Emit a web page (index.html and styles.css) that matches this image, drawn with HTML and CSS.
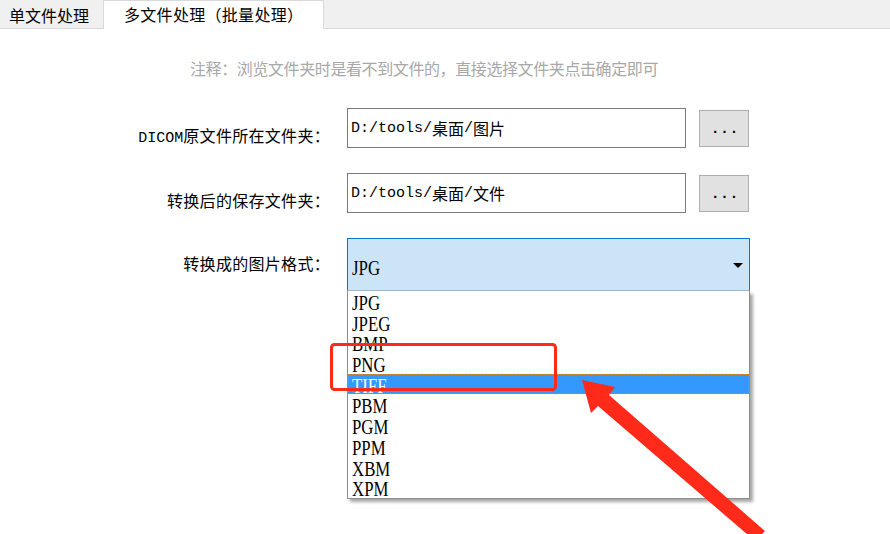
FILE: index.html
```html
<!DOCTYPE html>
<html lang="zh-CN">
<head>
<meta charset="utf-8">
<title>多文件处理</title>
<link rel="stylesheet" href="styles.css">
</head>
<body>
<div class="app">
  <div class="tabbar">
    <div class="tab">单文件处理</div>
    <div class="tab active">多文件处理（批量处理）</div>
  </div>
  <div class="panel">
    <p class="note">注释：浏览文件夹时是看不到文件的，直接选择文件夹点击确定即可</p>
    <div class="form">
      <div class="row">
        <label class="label"><span class="lat">DICOM</span>原文件所在文件夹：</label>
        <div class="input"><span class="lat">D:/tools/</span>桌面<span class="lat">/</span>图片</div>
        <button class="btn">...</button>
      </div>
      <div class="row">
        <label class="label">转换后的保存文件夹：</label>
        <div class="input"><span class="lat">D:/tools/</span>桌面<span class="lat">/</span>文件</div>
        <button class="btn">...</button>
      </div>
      <div class="row combo-row">
        <label class="label">转换成的图片格式：</label>
        <div class="combo-wrap">
          <div class="combo"><span class="cond">JPG</span><span class="caret"></span></div>
          <ul class="list">
            <li><span class="cond">JPG</span></li>
            <li><span class="cond">JPEG</span></li>
            <li><span class="cond">BMP</span></li>
            <li><span class="cond">PNG</span></li>
            <li class="sel"><span class="cond">TIFF</span></li>
            <li><span class="cond">PBM</span></li>
            <li><span class="cond">PGM</span></li>
            <li><span class="cond">PPM</span></li>
            <li><span class="cond">XBM</span></li>
            <li><span class="cond">XPM</span></li>
          </ul>
        </div>
      </div>
    </div>
  </div>
  <svg class="annot" width="890" height="534" viewBox="0 0 890 534">
    <rect x="331.5" y="344.5" width="224" height="45" rx="3" ry="3" fill="none" stroke="#ff2a1a" stroke-width="3"/>
    <polygon points="582,380 615,387 609,395 765,531 755,541 598,406 591,413" fill="#ff2a1a"/>
  </svg>
</div>
</body>
</html>
```

FILE: styles.css
```css
html, body {
  margin: 0;
  padding: 0;
  background: #ffffff;
}
.app {
  position: relative;
  width: 890px;
  height: 534px;
  overflow: hidden;
  font-family: "Noto Sans CJK SC", "Noto Sans", sans-serif;
  font-size: 16px;
  color: #000;
}
.tabbar {
  display: flex;
  align-items: flex-end;
  height: 28px;
  background: #f0f0f0;
  border-bottom: 1px solid #d9d9d9;
}
.tab {
  height: 26px;
  line-height: 26px;
  padding: 0 14px 0 9px;
  font-size: 16px;
  color: #000;
}
.tab.active {
  height: 28px;
  line-height: 26px;
  padding: 0 20px 0 20px;
  background: #fff;
  border: 1px solid #d9d9d9;
  border-bottom: none;
  margin-bottom: -1px;
  letter-spacing: 0.3px;
}
.panel {
  display: flex;
  flex-direction: column;
}
.note {
  margin: 28px 0 0 0;
  padding-left: 190px;
  line-height: 22px;
  color: #a8a8a8;
  font-size: 16px;
  letter-spacing: -0.4px;
}
.form {
  display: flex;
  flex-direction: column;
  gap: 25px;
  margin-top: 29px;
}
.row {
  display: flex;
  align-items: flex-start;
  height: 40px;
}
.combo-row {
  height: 53px;
}
.label {
  width: 330px;
  text-align: right;
  font-size: 16px;
  line-height: 20px;
  margin-top: 17px;
  flex: none;
  letter-spacing: 0.3px;
}
.combo-row .label {
  margin-top: 15px;
}
.lat {
  font-family: "Liberation Mono", monospace;
  font-size: 15px;
  letter-spacing: 0;
}
.label .lat {
  font-size: 15px;
}
.input {
  box-sizing: border-box;
  width: 339px;
  height: 40px;
  margin-left: 17px;
  border: 1px solid #7a7a7a;
  background: #fff;
  padding: 0 3px;
  display: flex;
  align-items: center;
  font-size: 16px;
  white-space: nowrap;
  flex: none;
}
.btn {
  box-sizing: border-box;
  width: 50px;
  height: 37px;
  margin-top: 2px;
  margin-left: 13px;
  border: 1px solid #adadad;
  background: #e1e1e1;
  font-family: "Liberation Mono", monospace;
  font-size: 14px;
  font-weight: bold;
  letter-spacing: 1px;
  color: #000;
  padding: 0 0 0 2px;
  flex: none;
}
.combo-wrap {
  position: relative;
  margin-left: 17px;
  width: 403px;
  flex: none;
}
.combo {
  box-sizing: border-box;
  height: 53px;
  border: 1px solid #0078d7;
  border-bottom-color: #9db8d0;
  background: #cce4f7;
  display: flex;
  align-items: center;
  padding: 6px 4px 0 4px;
  position: relative;
}
.cond {
  display: inline-block;
  font-family: "Liberation Serif", serif;
  font-size: 21px;
  line-height: 20px;
  transform: scaleX(0.8);
  transform-origin: left center;
}
.caret {
  position: absolute;
  right: 6px;
  top: 24px;
  width: 0;
  height: 0;
  border-left: 5px solid transparent;
  border-right: 5px solid transparent;
  border-top: 5px solid #000;
}
.list {
  position: absolute;
  left: 0;
  top: 53px;
  width: 403px;
  box-sizing: border-box;
  margin: 0;
  padding: 0;
  list-style: none;
  background: #fff;
  border: 1px solid #8d8d8d;
  border-top: none;
  box-shadow: 3px 3px 3px rgba(0, 0, 0, 0.35);
}
.list li {
  box-sizing: border-box;
  height: 20.7px;
  line-height: 20px;
  padding-left: 4px;
  padding-top: 2px;
  overflow: visible;
  color: #000;
}
.list li .cond {
  line-height: 20px;
}
.list li.sel {
  background: #3399ff;
  color: #fff;
  outline: 1px dotted #c98a3a;
  outline-offset: -1px;
  position: relative;
  z-index: 1;
}
.annot {
  position: absolute;
  left: 0;
  top: 0;
  pointer-events: none;
  z-index: 5;
}
```
